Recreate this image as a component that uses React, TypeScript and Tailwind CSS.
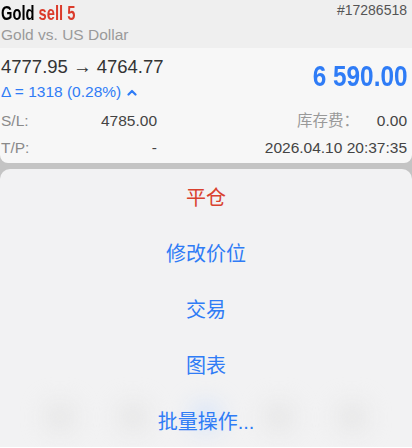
import React from "react";

const sans = { fontFamily: '"Liberation Sans", "Noto Sans CJK SC", sans-serif' };

const actions = [
  { label: "平仓", red: true },
  { label: "修改价位" },
  { label: "交易" },
  { label: "图表" },
  { label: "批量操作..." },
];

function TabGhosts() {
  // blurred tab bar that shows through the bottom of the sheet
  return (
    <div className="absolute inset-x-0 bottom-0 h-[60px] flex justify-around items-center px-6 pointer-events-none">
      {[0, 1, 2, 3, 4].map((i) => (
        <div key={i} className={`w-[26px] h-[26px] rounded-full blur-md ${i === 2 ? "bg-[#cfe0fb]" : "bg-[#e2e2e2]"}`} />
      ))}
    </div>
  );
}

export default function App() {
  return (
    <div className="w-[412px] h-[448px] overflow-hidden bg-[#c4c4c4] flex flex-col" style={sans}>
      <div className="bg-[#efefef] px-[1px] pt-[1px] h-[48px]">
        <div className="flex justify-between items-start">
          <div className="text-[21px] leading-[24px] font-bold inline-block origin-left scale-x-[0.7] whitespace-nowrap">
            <span className="text-black">Gold</span> <span className="text-[#db3b2b]">sell 5</span>
          </div>
          <div className="text-[14px] leading-[16px] text-[#555] pr-[4px] pt-[1px]">#17286518</div>
        </div>
        <div className="text-[15.5px] leading-[20px] text-[#9a9a9a]">Gold vs. US Dollar</div>
      </div>

      <div className="bg-[#f7f7f7] rounded-b-[8px] h-[115px] px-[1px]">
        <div className="flex justify-between items-center pt-[8px]">
          <div className="flex flex-col">
            <div className="text-[18.5px] leading-[22px] text-[#333]">4777.95 → 4764.77</div>
            <div className="flex items-center gap-[6px] text-[15.5px] leading-[18px] text-[#2f7cf6] mt-[5px]">
              <span>Δ = 1318 (0.28%)</span>
              <svg width="10" height="7" viewBox="0 0 10 7" className="mt-[1px]">
                <path d="M1.5 5.5 L5 2 L8.5 5.5" fill="none" stroke="#2f7cf6" strokeWidth="2.2" strokeLinecap="round" strokeLinejoin="round" />
              </svg>
            </div>
          </div>
          <div className="text-[29px] leading-[32px] font-bold text-[#2f7cf6] pr-[4px] mb-[6px] inline-block origin-right scale-x-[0.84] whitespace-nowrap">
            6 590.00
          </div>
        </div>
        <div className="mt-[6px] text-[15.5px] leading-[27px] pr-[4px]">
          <div className="flex items-center">
            <span className="w-[40px] text-[#8a8a8a]">S/L:</span>
            <span className="w-[116px] text-right text-[#444]">4785.00</span>
            <span className="flex-1 text-right text-[#999]">库存费：</span>
            <span className="w-[48px] text-right text-[#444]">0.00</span>
          </div>
          <div className="flex items-center">
            <span className="w-[40px] text-[#8a8a8a]">T/P:</span>
            <span className="w-[116px] text-right text-[#444]">-</span>
            <span className="flex-1 text-right text-[#444]">2026.04.10 20:37:35</span>
          </div>
        </div>
      </div>

      <div className="mt-[6px] flex-1 relative bg-[#f2f2f3] rounded-t-[10px] overflow-hidden border-b border-white">
        <TabGhosts />
        <div className="relative flex flex-col pt-[1px]">
          {actions.map((a) => (
            <div
              key={a.label}
              className={`h-[56px] flex items-center justify-center text-[20px] ${a.red ? "text-[#d9412e]" : "text-[#2f7cf6]"}`}
            >
              {a.label}
            </div>
          ))}
        </div>
      </div>
    </div>
  );
}
